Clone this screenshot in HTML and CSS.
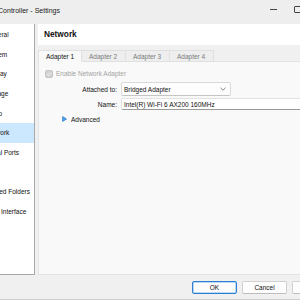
FILE: index.html
```html
<!DOCTYPE html>
<html lang="en">
<head>
    <meta charset="UTF-8">
    <meta name="viewport" content="width=device-width, initial-scale=1.0">
    <title>Domain Controller - Settings</title>
    <link rel="stylesheet" href="styles.css">
</head>
<body>
    <div class="window">
        <div class="titlebar">
            <span class="title">Domain Controller - Settings</span>
            <div class="controls">
                <span class="ctl"><span class="ctl-min"></span></span>
                <span class="ctl"><span class="ctl-max"></span></span>
                <span class="ctl">✕</span>
            </div>
        </div>

        <div class="main">
            <ul class="sidebar">
                <li>General</li>
                <li>System</li>
                <li>Display</li>
                <li>Storage</li>
                <li>Audio</li>
                <li class="active">Network</li>
                <li>Serial Ports</li>
                <li>USB</li>
                <li>Shared Folders</li>
                <li>User Interface</li>
            </ul>

            <div class="page">
                <div class="page-title">Network</div>

                <div class="tabs">
                    <div class="tab active">Adapter 1</div>
                    <div class="tab">Adapter 2</div>
                    <div class="tab">Adapter 3</div>
                    <div class="tab">Adapter 4</div>
                </div>

                <div class="pane">
                    <div class="check disabled">
                        <svg class="check-box" width="8" height="8" viewBox="0 0 8 8">
                            <rect x="0.5" y="0.5" width="7" height="7" rx="1.5" fill="#d2d2d2" stroke="#c4c4c4"/>
                            <path d="M2 4.2 L3.4 5.6 L6 2.6" fill="none" stroke="#f2f2f2" stroke-width="1"/>
                        </svg>
                        <span>Enable Network Adapter</span>
                    </div>

                    <div class="form">
                        <span class="label">Attached to:</span>
                        <div class="combo">
                            <span>Bridged Adapter</span>
                            <svg width="6" height="4" viewBox="0 0 6 4">
                                <path d="M0.5 0.8 L3 3.2 L5.5 0.8" fill="none" stroke="#666" stroke-width="0.8"/>
                            </svg>
                        </div>
                        <span class="label">Name:</span>
                        <div class="combo editable">
                            <span>Intel(R) Wi-Fi 6 AX200 160MHz</span>
                        </div>
                    </div>

                    <div class="advanced">
                        <svg width="5" height="6" viewBox="0 0 5 6">
                            <path d="M0.6 0.6 L4.5 3 L0.6 5.4 Z" fill="#5aa5e6" stroke="#2f80d0" stroke-width="0.8" stroke-linejoin="round"/>
                        </svg>
                        <span>Advanced</span>
                    </div>
                </div>
            </div>
        </div>

        <div class="buttons">
            <button class="btn default">OK</button>
            <button class="btn">Cancel</button>
            <button class="btn">Help</button>
        </div>
    </div>
</body>
</html>
```

FILE: styles.css
```css
* {
    margin: 0;
    padding: 0;
    box-sizing: border-box;
}

body {
    font-family: "Liberation Sans", Arial, sans-serif;
    font-size: 6.5px;
    color: #111;
    background: #f0f0f0;
    overflow: hidden;
    width: 300px;
    height: 300px;
}

.window {
    width: 380px;
    height: 300px;
    margin-left: -40px;
    display: flex;
    flex-direction: column;
    background: #f0f0f0;
}

/* title bar */

.titlebar {
    height: 24px;
    padding-bottom: 4px;
    display: flex;
    align-items: center;
    justify-content: space-between;
    background: #eeeeee;
}

.title {
    padding-left: 12px;
    font-size: 7px;
    color: #1b1b1b;
    white-space: nowrap;
}

.controls {
    display: flex;
    padding-right: 7px;
}

.ctl {
    width: 24px;
    display: flex;
    align-items: center;
    justify-content: center;
    font-size: 8px;
    color: #333;
}

.ctl-min {
    width: 7px;
    height: 1px;
    margin-top: -1px;
    background: #444;
}

.ctl-max {
    width: 7px;
    height: 7px;
    margin-top: -1px;
    border: 1px solid #444;
    border-radius: 1px;
}

/* main area */

.main {
    flex: 1;
    display: flex;
    gap: 3px;
    padding-right: 3px;
    min-height: 0;
}

.sidebar {
    width: 69px;
    margin-left: 6px;
    padding-top: 1.2px;
    list-style: none;
    background: #ffffff;
    border-right: 1px solid #a9a9a9;
    border-bottom: 1px solid #a9a9a9;
}

.sidebar li {
    height: 19.6px;
    line-height: 19.6px;
    padding-left: 19.5px;
    white-space: nowrap;
}

.sidebar li.active {
    background: #cce8ff;
}

.page {
    flex: 1;
    display: flex;
    flex-direction: column;
}

.page-title {
    height: 21px;
    line-height: 21px;
    padding-left: 6px;
    font-size: 8.3px;
    font-weight: 700;
    background: #ffffff;
}

/* tabs */

.tabs {
    display: flex;
    height: 12px;
    margin-top: 5px;
    margin-bottom: -1px;
    position: relative;
    z-index: 1;
}

.tab {
    width: 44px;
    height: 12px;
    line-height: 11px;
    padding-left: 7px;
    color: #7a7a7a;
    background: #eeeeee;
    border: 1px solid #e0e0e0;
    border-left: none;
    white-space: nowrap;
}

.tab.active {
    color: #111;
    background: #f9f9f9;
    border-left: 1px solid #e0e0e0;
    border-bottom-color: #f9f9f9;
}

.pane {
    flex: 1;
    padding: 7px 0 0 6px;
    background: #f9f9f9;
    border: 1px solid #e3e3e3;
}

.check {
    display: flex;
    align-items: center;
    gap: 3px;
    height: 9px;
}

.check.disabled {
    color: #a3a3a3;
}

/* form rows */

.form {
    display: grid;
    grid-template-columns: 72px 1fr;
    column-gap: 4px;
    row-gap: 2px;
    margin-top: 4px;
    align-items: center;
}

.label {
    text-align: right;
}

.combo {
    width: 110px;
    height: 14px;
    padding: 0 4px 0 2px;
    display: flex;
    align-items: center;
    justify-content: space-between;
    background: #fdfdfd;
    border: 1px solid #dadada;
    border-bottom-color: #c4c4c4;
    border-radius: 2px;
    white-space: nowrap;
}

.combo.editable {
    width: auto;
    height: 12px;
    background: #ffffff;
    border-color: #e2e2e2;
    border-bottom-color: #9a9a9a;
    border-right: none;
}

.advanced {
    display: flex;
    align-items: center;
    gap: 4px;
    height: 10px;
    margin-top: 4px;
    padding-left: 17px;
}

/* dialog buttons */

.buttons {
    height: 25px;
    padding: 6px 3px 0 0;
    display: flex;
    justify-content: flex-end;
    align-items: flex-start;
    gap: 5px;
    border-bottom: 1px solid #cfcfcf;
}

.btn {
    width: 45px;
    height: 13px;
    font-family: inherit;
    font-size: 6.5px;
    color: #111;
    background: #fdfdfd;
    border: 1px solid #d0d0d0;
    border-bottom-color: #bdbdbd;
    border-radius: 2px;
}

.btn.default {
    border: 1px solid #2a7fd4;
    box-shadow: inset 0 0 0 0.5px #7fb3e8;
}
```
